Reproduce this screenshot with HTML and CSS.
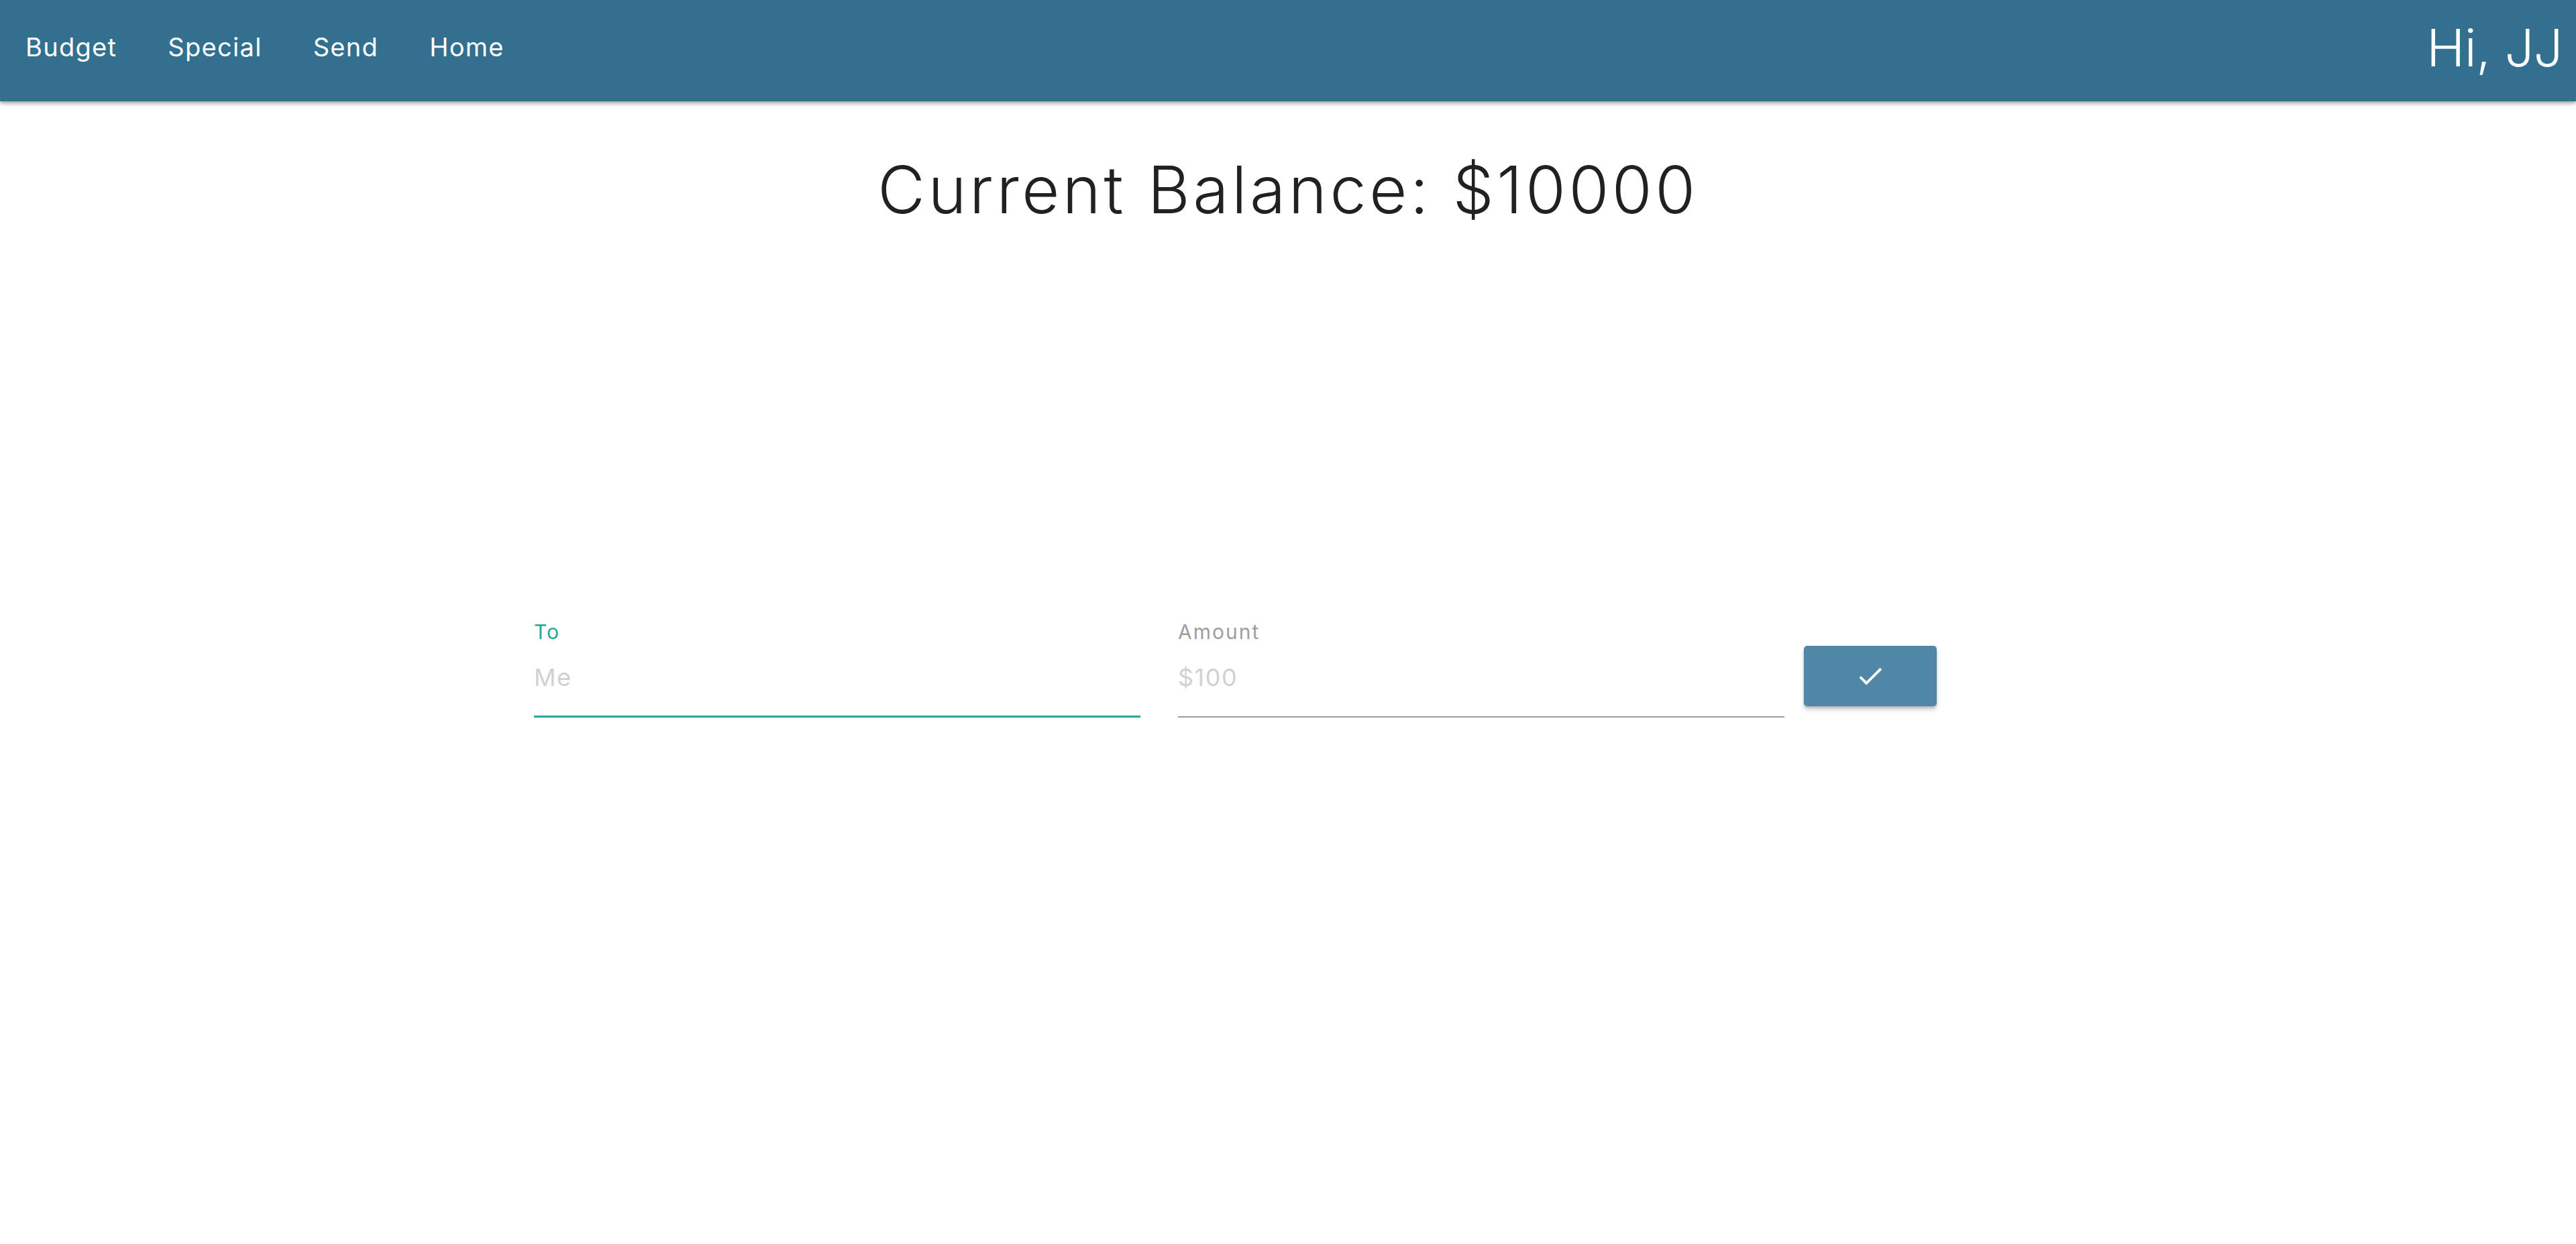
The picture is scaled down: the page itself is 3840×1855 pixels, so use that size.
FILE: index.html
```html
<!DOCTYPE html>
<html lang="en">
<head>
<meta charset="utf-8">
<title>Send</title>
<link rel="stylesheet" href="styles.css">
</head>
<body>
<nav class="navbar">
  <ul class="nav-links">
    <li><a href="#">Budget</a></li>
    <li><a href="#">Special</a></li>
    <li><a href="#">Send</a></li>
    <li><a href="#">Home</a></li>
  </ul>
  <div class="greeting">Hi, JJ</div>
</nav>
<main class="page">
  <h1 class="balance">Current Balance: $10000</h1>
  <form class="send-form">
    <div class="field field-active">
      <label class="field-label" for="to">To</label>
      <input class="field-input" id="to" type="text" placeholder="Me">
    </div>
    <div class="field">
      <label class="field-label" for="amount">Amount</label>
      <input class="field-input" id="amount" type="text" placeholder="$100">
    </div>
    <button class="submit-btn" type="button" aria-label="Submit">
      <svg class="check-icon" viewBox="0 0 24 24" width="46" height="46"><path fill="#fff" d="M9 16.17L4.83 12l-1.42 1.41L9 19 21 7l-1.41-1.41z"/></svg>
    </button>
  </form>
</main>
</body>
</html>
```

FILE: styles.css
```css
* { box-sizing: border-box; }
html, body { margin: 0; padding: 0; background: #fff; }
body { font-family: Inter, "Open Sans", sans-serif; color: #212121; }

.navbar {
  height: 151px;
  background: #33708f;
  display: flex;
  align-items: center;
  justify-content: space-between;
  box-shadow: 0 4px 6px rgba(0,0,0,0.25), 0 2px 3px rgba(0,0,0,0.15);
}
.nav-links {
  list-style: none;
  margin: 0;
  padding: 0;
  display: flex;
}
.nav-links a {
  display: block;
  padding: 0 38px;
  color: #fff;
  text-decoration: none;
  font-size: 38px;
  font-weight: 400;
  letter-spacing: 1.3px;
  line-height: 151px;
  margin-top: -10px;
}
.greeting {
  color: #fff;
  font-size: 77px;
  font-weight: 300;
  padding-right: 20px;
  margin-top: -10px;
  letter-spacing: -0.5px;
}

.balance {
  margin: 74px 0 0;
  text-align: center;
  font-size: 97px;
  font-weight: 300;
  line-height: 1.2;
  letter-spacing: 4.5px;
}

.send-form {
  display: flex;
  align-items: flex-start;
  margin: 581px 0 0 796px;
}
.field {
  width: 904px;
  display: flex;
  flex-direction: column;
}
.field + .field { margin-left: 56px; }
.field-label {
  font-size: 30px;
  color: #9e9e9e;
  line-height: 40px;
  letter-spacing: 2px;
}
.field-active .field-label { color: #26a69a; }
.field-input {
  border: none;
  outline: none;
  background: transparent;
  font-family: inherit;
  font-size: 36px;
  letter-spacing: 1.5px;
  height: 108px;
  padding: 0 0 10px;
  border-bottom: 2px solid #9e9e9e;
  color: #212121;
}
.field-input::placeholder { color: #d1d1d1; }
.field-active .field-input {
  border-bottom: 3px solid #26a69a;
  box-shadow: 0 2px 0 0 #26a69a;
}
.submit-btn {
  margin: 41px 0 0 29px;
  width: 198px;
  height: 90px;
  border: none;
  border-radius: 5px;
  background: #5086a6;
  display: flex;
  align-items: center;
  justify-content: center;
  box-shadow: 0 5px 6px rgba(0,0,0,0.2), 0 2px 3px rgba(0,0,0,0.15);
  cursor: pointer;
}
.check-icon { display: block; }
```
